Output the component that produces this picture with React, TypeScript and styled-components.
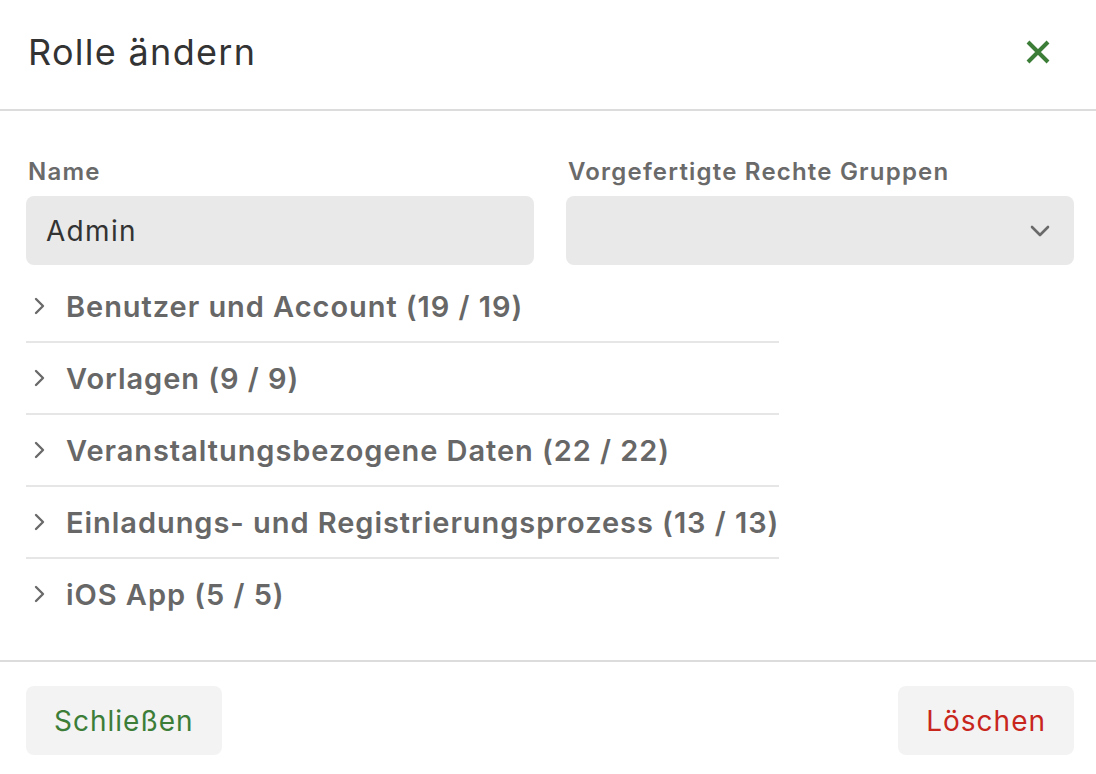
import React from 'react';
import styled, { createGlobalStyle } from 'styled-components';

const GlobalStyle = createGlobalStyle`
  html, body {
    margin: 0;
    padding: 0;
    background: #fff;
  }
  body {
    font-family: Inter, "Noto Sans", "Liberation Sans", sans-serif;
    -webkit-font-smoothing: antialiased;
  }
`;

const Dialog = styled.div`
  width: 1096px;
  height: 774px;
  display: flex;
  flex-direction: column;
  background: #fff;
`;

const Header = styled.header`
  height: 103px;
  display: flex;
  align-items: center;
  justify-content: space-between;
  padding: 0 28px 6px 28px;
  border-bottom: 2px solid #dcdcdc;
  box-sizing: content-box;
`;

const Title = styled.h1`
  margin: 0;
  font-size: 36px;
  font-weight: 400;
  color: #333;
  letter-spacing: 1.3px;
`;

const CloseButton = styled.button`
  border: none;
  background: none;
  padding: 0;
  margin-right: 16px;
  width: 28px;
  height: 28px;
  display: flex;
  align-items: center;
  justify-content: center;
  cursor: pointer;
`;

const Body = styled.div`
  padding: 47px 22px 29px 26px;
  flex: 1;
`;

const FieldGrid = styled.div`
  display: grid;
  grid-template-columns: 1fr 1fr;
  gap: 32px;
`;

const Field = styled.div`
  display: flex;
  flex-direction: column;
`;

const Label = styled.label`
  font-size: 24px;
  line-height: 27px;
  font-weight: 600;
  color: #6a6a6a;
  letter-spacing: 1.2px;
  margin: 0 0 11px 2px;
`;

const InputBox = styled.div`
  height: 69px;
  border-radius: 8px;
  background: #e9e9e9;
  display: flex;
  align-items: center;
  justify-content: space-between;
  padding: 0 20px;
  font-size: 28px;
  letter-spacing: 1.3px;
  color: #333;
`;

const Groups = styled.div`
  width: max-content;
  margin-top: 6px;
`;

const Group = styled.div<{ $last?: boolean }>`
  height: 70px;
  display: flex;
  align-items: center;
  gap: 12px;
  border-bottom: ${(p) => (p.$last ? 'none' : '2px solid #e6e6e6')};
`;

const GroupTitle = styled.span`
  font-size: 29px;
  font-weight: 600;
  color: #676767;
  letter-spacing: 0.95px;
  white-space: nowrap;
`;

const Footer = styled.footer`
  border-top: 2px solid #dcdcdc;
  padding: 24px 22px 0 26px;
  height: 88px;
  display: flex;
  justify-content: space-between;
  align-items: flex-start;
`;

const FooterButton = styled.button<{ $tone: 'green' | 'red' }>`
  height: 69px;
  padding: 0 28px;
  border: none;
  border-radius: 8px;
  background: #f3f3f3;
  font-family: inherit;
  font-size: 28px;
  letter-spacing: 1px;
  color: ${(p) => (p.$tone === 'green' ? '#3c7d38' : '#c8261c')};
  cursor: pointer;
`;

const Chevron = ({ dir }: { dir: 'right' | 'down' }) =>
  dir === 'right' ? (
    <svg width="28" height="28" viewBox="0 0 28 28" fill="none">
      <path d="M10 7 L17 14 L10 21" stroke="#6a6a6a" strokeWidth="2.4" strokeLinecap="round" strokeLinejoin="round" />
    </svg>
  ) : (
    <svg width="28" height="28" viewBox="0 0 28 28" fill="none">
      <path d="M6 10 L14 18 L22 10" stroke="#6a6a6a" strokeWidth="2.6" strokeLinecap="round" strokeLinejoin="round" />
    </svg>
  );

const groups = [
  'Benutzer und Account (19 / 19)',
  'Vorlagen (9 / 9)',
  'Veranstaltungsbezogene Daten (22 / 22)',
  'Einladungs- und Registrierungsprozess (13 / 13)',
  'iOS App (5 / 5)',
];

export default function App() {
  return (
    <Dialog>
      <GlobalStyle />
      <Header>
        <Title>Rolle ändern</Title>
        <CloseButton aria-label="Schließen">
          <svg width="24" height="24" viewBox="0 0 24 24">
            <path d="M2 2 L22 22 M22 2 L2 22" stroke="#3c7d38" strokeWidth="4" strokeLinecap="butt" />
          </svg>
        </CloseButton>
      </Header>
      <Body>
        <FieldGrid>
          <Field>
            <Label>Name</Label>
            <InputBox>Admin</InputBox>
          </Field>
          <Field>
            <Label>Vorgefertigte Rechte Gruppen</Label>
            <InputBox>
              <span />
              <Chevron dir="down" />
            </InputBox>
          </Field>
        </FieldGrid>
        <Groups>
          {groups.map((g, i) => (
            <Group key={g} $last={i === groups.length - 1}>
              <Chevron dir="right" />
              <GroupTitle>{g}</GroupTitle>
            </Group>
          ))}
        </Groups>
      </Body>
      <Footer>
        <FooterButton $tone="green">Schließen</FooterButton>
        <FooterButton $tone="red">Löschen</FooterButton>
      </Footer>
    </Dialog>
  );
}
